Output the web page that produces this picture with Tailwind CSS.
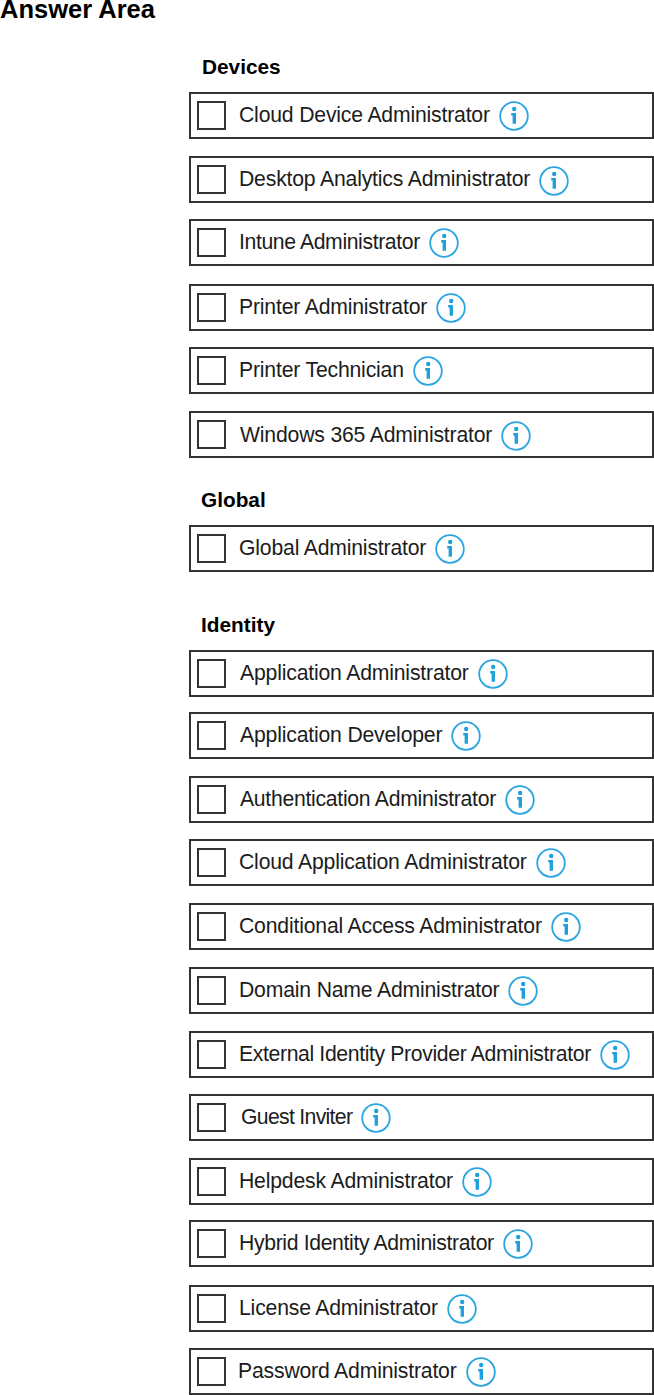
<!DOCTYPE html>
<html lang="en">
<head>
    <meta charset="UTF-8">
    <title>Answer Area</title>
    <script src="https://cdn.jsdelivr.net/npm/@tailwindcss/browser@4"></script>
</head>
<body class="bg-white font-['Liberation_Sans',Arial,sans-serif] text-[#1c1c1c] overflow-hidden">
    <svg class="hidden">
        <symbol id="info" viewBox="0 0 30 30">
            <circle cx="15" cy="15" r="13.8" fill="none" stroke="#2ba6e0" stroke-width="1.8"/>
            <circle cx="15.2" cy="8" r="2.2" fill="#1f9fdc"/>
            <path d="M12.2 12h4.8v10.8h-3.4v-8.4h-1.4z" fill="#1f9fdc"/>
        </symbol>
    </svg>

    <h1 class="text-[25.5px] leading-[19px] font-bold text-black">Answer Area</h1>

    <div class="ml-[189px] w-[465px] text-[21.2px] tracking-[-0.18px]">
        <h2 class="mt-[35px] ml-[13px] text-[20.8px] tracking-normal leading-[26px] font-bold text-black">Devices</h2>
        <div class="mt-[12px] flex h-[47px] items-center border-2 border-[#333]">
            <span class="ml-[6px] size-[29px] border-2 border-[#333]"></span>
            <span class="ml-[13px] mb-[2px]">Cloud Device Administrator</span>
            <svg class="ml-[9px] size-[30px]"><use href="#info"/></svg>
        </div>
        <div class="mt-[17px] flex h-[47px] items-center border-2 border-[#333]">
            <span class="ml-[6px] size-[29px] border-2 border-[#333]"></span>
            <span class="ml-[13px] mb-[2px]">Desktop Analytics Administrator</span>
            <svg class="ml-[9px] mt-[2px] size-[30px]"><use href="#info"/></svg>
        </div>
        <div class="mt-[16px] flex h-[47px] items-center border-2 border-[#333]">
            <span class="ml-[6px] size-[29px] border-2 border-[#333]"></span>
            <span class="ml-[13px] mb-[2px] tracking-[-0.38px]">Intune Administrator</span>
            <svg class="ml-[9px] size-[30px]"><use href="#info"/></svg>
        </div>
        <div class="mt-[18px] flex h-[47px] items-center border-2 border-[#333]">
            <span class="ml-[6px] size-[29px] border-2 border-[#333]"></span>
            <span class="ml-[13px] mb-[2px]">Printer Administrator</span>
            <svg class="ml-[9px] size-[30px]"><use href="#info"/></svg>
        </div>
        <div class="mt-[16px] flex h-[47px] items-center border-2 border-[#333]">
            <span class="ml-[6px] size-[29px] border-2 border-[#333]"></span>
            <span class="ml-[13px] mb-[2px]">Printer Technician</span>
            <svg class="ml-[9px] size-[30px]"><use href="#info"/></svg>
        </div>
        <div class="mt-[17px] flex h-[47px] items-center border-2 border-[#333]">
            <span class="ml-[6px] size-[29px] border-2 border-[#333]"></span>
            <span class="ml-[14px]">Windows 365 Administrator</span>
            <svg class="ml-[9px] mt-[2px] size-[30px]"><use href="#info"/></svg>
        </div>

        <h2 class="mt-[29px] ml-[12px] text-[20.8px] tracking-normal leading-[26px] font-bold text-black">Global</h2>
        <div class="mt-[12px] flex h-[47px] items-center border-2 border-[#333]">
            <span class="ml-[6px] size-[29px] border-2 border-[#333]"></span>
            <span class="ml-[13px] mb-[2px]">Global Administrator</span>
            <svg class="ml-[9px] size-[30px]"><use href="#info"/></svg>
        </div>

        <h2 class="mt-[40px] ml-[12px] text-[20.8px] tracking-normal leading-[26px] font-bold text-black">Identity</h2>
        <div class="mt-[12px] flex h-[47px] items-center border-2 border-[#333]">
            <span class="ml-[6px] size-[29px] border-2 border-[#333]"></span>
            <span class="ml-[14px] mb-[2px]">Application Administrator</span>
            <svg class="ml-[9px] size-[30px]"><use href="#info"/></svg>
        </div>
        <div class="mt-[15px] flex h-[47px] items-center border-2 border-[#333]">
            <span class="ml-[6px] size-[29px] border-2 border-[#333]"></span>
            <span class="ml-[14px] mb-[2px]">Application Developer</span>
            <svg class="ml-[9px] size-[30px]"><use href="#info"/></svg>
        </div>
        <div class="mt-[17px] flex h-[47px] items-center border-2 border-[#333]">
            <span class="ml-[6px] size-[29px] border-2 border-[#333]"></span>
            <span class="ml-[14px] mb-[2px] tracking-[-0.28px]">Authentication Administrator</span>
            <svg class="ml-[9px] size-[30px]"><use href="#info"/></svg>
        </div>
        <div class="mt-[16px] flex h-[47px] items-center border-2 border-[#333]">
            <span class="ml-[6px] size-[29px] border-2 border-[#333]"></span>
            <span class="ml-[13px] mb-[2px]">Cloud Application Administrator</span>
            <svg class="ml-[9px] size-[30px]"><use href="#info"/></svg>
        </div>
        <div class="mt-[17px] flex h-[47px] items-center border-2 border-[#333]">
            <span class="ml-[6px] size-[29px] border-2 border-[#333]"></span>
            <span class="ml-[13px] mb-[2px]">Conditional Access Administrator</span>
            <svg class="ml-[9px] size-[30px]"><use href="#info"/></svg>
        </div>
        <div class="mt-[17px] flex h-[47px] items-center border-2 border-[#333]">
            <span class="ml-[6px] size-[29px] border-2 border-[#333]"></span>
            <span class="ml-[13px] mb-[2px]">Domain Name Administrator</span>
            <svg class="ml-[9px] size-[30px]"><use href="#info"/></svg>
        </div>
        <div class="mt-[17px] flex h-[47px] items-center border-2 border-[#333]">
            <span class="ml-[6px] size-[29px] border-2 border-[#333]"></span>
            <span class="ml-[13px] mb-[2px] tracking-[-0.36px]">External Identity Provider Administrator</span>
            <svg class="ml-[9px] size-[30px]"><use href="#info"/></svg>
        </div>
        <div class="mt-[16px] flex h-[47px] items-center border-2 border-[#333]">
            <span class="ml-[6px] size-[29px] border-2 border-[#333]"></span>
            <span class="ml-[15px] mb-[2px] tracking-[-0.68px]">Guest Inviter</span>
            <svg class="ml-[9px] size-[30px]"><use href="#info"/></svg>
        </div>
        <div class="mt-[17px] flex h-[47px] items-center border-2 border-[#333]">
            <span class="ml-[6px] size-[29px] border-2 border-[#333]"></span>
            <span class="ml-[13px] mb-[2px]">Helpdesk Administrator</span>
            <svg class="ml-[9px] size-[30px]"><use href="#info"/></svg>
        </div>
        <div class="mt-[15px] flex h-[47px] items-center border-2 border-[#333]">
            <span class="ml-[6px] size-[29px] border-2 border-[#333]"></span>
            <span class="ml-[13px] mb-[2px] tracking-[-0.35px]">Hybrid Identity Administrator</span>
            <svg class="ml-[9px] size-[30px]"><use href="#info"/></svg>
        </div>
        <div class="mt-[18px] flex h-[47px] items-center border-2 border-[#333]">
            <span class="ml-[6px] size-[29px] border-2 border-[#333]"></span>
            <span class="ml-[13px] mb-[2px]">License Administrator</span>
            <svg class="ml-[9px] size-[30px]"><use href="#info"/></svg>
        </div>
        <div class="mt-[16px] flex h-[47px] items-center border-2 border-[#333]">
            <span class="ml-[6px] size-[29px] border-2 border-[#333]"></span>
            <span class="ml-[12px] mb-[2px]">Password Administrator</span>
            <svg class="ml-[9px] size-[30px]"><use href="#info"/></svg>
        </div>
    </div>
</body>
</html>
